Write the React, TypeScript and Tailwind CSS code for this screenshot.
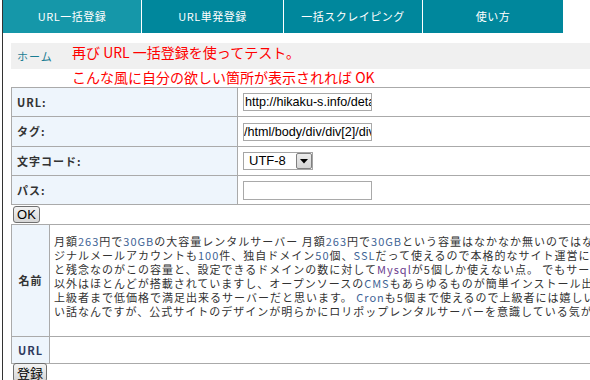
import React from "react";

const N = ({ children }: { children: React.ReactNode }) => (
  <span className="text-[#3f6496]">{children}</span>
);
const M = ({ children }: { children: React.ReactNode }) => (
  <span className="text-[#6a3c8e]">{children}</span>
);

export default function App() {
  return (
    <div className="relative w-[590px] h-[380px] overflow-hidden bg-white font-['Noto_Sans_CJK_JP',sans-serif]">
      <div className="ml-[2px] h-full border-l border-[#333] w-[1000px]">
        {/* nav */}
        <div className="flex h-[33px] text-white text-[11px] tracking-[0.5px]">
          <div className="w-[138px] bg-[#1597a9] flex items-center justify-center">URL一括登録</div>
          <div className="w-[142px] border-l border-white bg-[#00879c] flex items-center justify-center">URL単発登録</div>
          <div className="w-[139px] border-l border-white bg-[#00879c] flex items-center justify-center">一括スクレイピング</div>
          <div className="w-[141px] border-l border-white bg-[#00879c] flex items-center justify-center">使い方</div>
        </div>

        {/* breadcrumb */}
        <div className="mt-[10px] ml-[8px] h-[26px] bg-[#f0f0f0] flex items-center pl-[6px]">
          <span className="text-[11px] text-[#1a7d93] tracking-[1px]">ホーム</span>
        </div>

        {/* form table */}
        <div className="mt-[18px] ml-[8px] w-[800px] border-t border-l border-r border-[#aaa] text-[11px]">
          {[
            { label: "URL:", h: "h-[29px]", kind: "url" },
            { label: "タグ:", h: "h-[30px]", kind: "tag" },
            { label: "文字コード:", h: "h-[29px]", kind: "select" },
            { label: "パス:", h: "h-[29px]", kind: "path" },
          ].map((r) => (
            <div key={r.label} className={`flex ${r.h} border-b border-[#aaa]`}>
              <div className="w-[226px] bg-[#eef5fc] border-r border-[#aaa] pl-[5px] flex items-center font-bold tracking-[1px] text-[#333]">
                {r.label}
              </div>
              <div className="pl-[5px] flex items-center">
                {r.kind === "url" && (
                  <div className="w-[129px] h-[18px] border border-[#a9a9a9] px-[1px] overflow-hidden whitespace-nowrap font-['Liberation_Sans',sans-serif] text-[12.6px] leading-[16px] text-black">
                    http://hikaku-s.info/detail/
                  </div>
                )}
                {r.kind === "tag" && (
                  <div className="w-[129px] h-[18px] border border-[#a9a9a9] overflow-hidden whitespace-nowrap font-['Liberation_Sans',sans-serif] text-[12.6px] leading-[16px] text-black">
                    /html/body/div/div[2]/div[
                  </div>
                )}
                {r.kind === "select" && (
                  <div className="w-[70px] h-[18px] border border-[#a5a5a5] flex items-center bg-white">
                    <span className="flex-1 pl-[5px] font-['Liberation_Sans',sans-serif] text-[13px] leading-[16px] text-black">UTF-8</span>
                    <span className="w-[16px] h-[16px] bg-gradient-to-b from-[#ececec] to-[#d4d4d4] border border-[#808080] rounded-[2px] flex items-center justify-center">
                      <svg width="8" height="5" viewBox="0 0 8 5">
                        <path d="M0 0 L8 0 L4 4.5 Z" fill="#000" />
                      </svg>
                    </span>
                  </div>
                )}
                {r.kind === "path" && (
                  <div className="w-[129px] h-[19px] border border-[#a9a9a9]" />
                )}
              </div>
            </div>
          ))}
        </div>

        <div className="mt-[1px] ml-[10px] w-[27px] h-[17px] border border-[#707070] rounded-[3px] bg-gradient-to-b from-[#f4f4f4] to-[#d6d6d6] flex items-center justify-center font-['Liberation_Sans',sans-serif] text-[13px] leading-none text-black">
          OK
        </div>

        {/* result table */}
        <div className="mt-[1px] ml-[8px] w-[900px] border-t border-l border-r border-[#aaa] text-[11px]">
          <div className="flex h-[112px] border-b border-[#aaa]">
            <div className="w-[38px] shrink-0 bg-[#eef5fc] border-r border-[#aaa] flex items-center justify-center font-bold tracking-[1px] text-[#333]">
              名前
            </div>
            <div className="pl-[4px] pt-[9px] leading-[14px] tracking-[1px] text-[#333] whitespace-nowrap">
              <div>月額<N>263</N>円で<N>30GB</N>の大容量レンタルサーバー 月額<N>263</N>円で<N>30GB</N>という容量はなかなか無いのではないでしょうか。</div>
              <div>ジナルメールアカウントも<N>100</N>件、独自ドメイン<N>50</N>個、<N>SSL</N>だって使えるので本格的なサイト運営には持ってこい</div>
              <div>と残念なのがこの容量と、設定できるドメインの数に対して<M>Mysql</M>が5個しか使えない点。 でもサーバーの機能</div>
              <div>以外はほとんどが搭載されていますし、オープンソースの<N>CMS</N>もあらゆるものが簡単インストール出来ます。</div>
              <div>上級者まで低価格で満足出来るサーバーだと思います。 <N>Cron</N>も5個まで使えるので上級者には嬉しい限りです。</div>
              <div>い話なんですが、公式サイトのデザインが明らかにロリポップレンタルサーバーを意識している気がするのです</div>
            </div>
          </div>
          <div className="flex h-[27px] border-b border-[#aaa]">
            <div className="w-[38px] shrink-0 bg-[#eef5fc] border-r border-[#aaa] flex items-center justify-center font-bold tracking-[1px] text-[#2e3a5e]">
              URL
            </div>
            <div className="flex-1" />
          </div>
        </div>

        <div className="-mt-[1px] ml-[10px] w-[34px] h-[19px] border border-[#707070] rounded-[3px] bg-gradient-to-b from-[#f4f4f4] to-[#d6d6d6] flex items-center justify-center text-[13px] leading-none text-black">
          登録
        </div>
      </div>

      {/* red annotation */}
      <div className="absolute left-[72px] top-[40px] text-[14px] leading-[25px] text-[#f00] whitespace-nowrap">
        <div>再び URL 一括登録を使ってテスト。</div>
        <div>こんな風に自分の欲しい箇所が表示されれば OK</div>
      </div>
    </div>
  );
}
